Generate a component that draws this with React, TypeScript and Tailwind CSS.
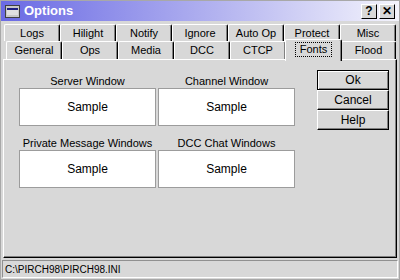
import React from "react";

const row1 = ["Logs", "Hilight", "Notify", "Ignore", "Auto Op", "Protect", "Misc"];
const row2 = ["General", "Ops", "Media", "DCC", "CTCP", "Fonts", "Flood"];

function Tab({ label, selected, w }: { label: string; selected?: boolean; w: number }) {
  if (selected) {
    return (
      <div
        className="relative z-10 -mt-[2px] -mb-[3px] -mx-[1px] flex h-[22px] items-start justify-center rounded-t-[2px] border-l border-t border-white border-r border-r-black bg-[#d8d8d8] pt-[2px] shadow-[inset_-1px_0_0_#808080]"
        style={{ width: w + 2 }}
      >
        <span className="border border-dotted border-black px-[4px] leading-[13px]">{label}</span>
      </div>
    );
  }
  return (
    <div
      className="flex h-full items-center justify-center rounded-t-[2px] border-l border-t border-white border-r border-r-black bg-[#d8d8d8] shadow-[inset_-1px_0_0_#808080]"
      style={{ width: w }}
    >
      {label}
    </div>
  );
}

function Box({ label }: { label: string }) {
  return (
    <div className="flex flex-col items-center">
      <div className="h-[13px] leading-[13px]">{label}</div>
      <div className="mt-[0px] flex h-[38px] w-[137px] items-center justify-center border border-[#9c9c9c] bg-white text-[12px]">
        Sample
      </div>
    </div>
  );
}

function Btn({ label, def }: { label: string; def?: boolean }) {
  return (
    <div
      className={
        "flex h-[20px] w-[72px] items-center justify-center bg-[#d8d8d8] text-[12px] " +
        (def
          ? "border border-black shadow-[inset_1px_1px_0_#fff,inset_-1px_-1px_0_#808080]"
          : "border-t border-l border-white border-r border-b border-r-black border-b-black shadow-[inset_-1px_-1px_0_#808080]")
      }
    >
      {label}
    </div>
  );
}

export default function App() {
  return (
    <div className="flex h-[280px] w-[400px] flex-col border border-[#a8a8a8] bg-[#d8d8d8] font-['Liberation_Sans',Arial,sans-serif] text-[11px] text-black">
      {/* title bar */}
      <div className="flex h-[20px] items-center bg-[linear-gradient(to_right,#6a6ae4,#b4b4f0_55%,#f4f4fc)] px-[4px]">
        <div className="mr-[4px] flex h-[13px] w-[15px] items-center justify-center border border-[#404040] bg-[#c8c8c8]">
          <div className="h-[7px] w-[11px] border-t-2 border-[#202080] bg-[#e0e0e0]" />
        </div>
        <span className="text-[13px] font-bold text-white">Options</span>
        <div className="ml-auto flex gap-[2px]">
          <div className="flex h-[15px] w-[16px] items-center justify-center border-l border-t border-white border-r border-b border-r-black border-b-black bg-[#d8d8d8] text-[12px] font-bold leading-none">
            ?
          </div>
          <div className="flex h-[15px] w-[16px] items-center justify-center border-l border-t border-white border-r border-b border-r-black border-b-black bg-[#d8d8d8] text-[12px] font-bold leading-none">
            ✕
          </div>
        </div>
      </div>

      {/* tabs */}
      <div className="mt-[3px] flex h-[17px] pl-[3px]">
        {row1.map((t) => (
          <Tab key={t} label={t} w={56} />
        ))}
      </div>
      <div className="flex h-[18px] pl-[5px]">
        {row2.map((t, i) => (
          <Tab key={t} label={t} w={i >= 5 ? 55 : 56} selected={t === "Fonts"} />
        ))}
      </div>

      {/* panel */}
      <div className="mx-[2px] flex h-[199px] border-l border-t border-white border-r border-b border-r-black border-b-black pl-[15px] pt-[15px] shadow-[inset_-1px_-1px_0_#808080]">
        <div className="grid grid-cols-[137px_137px] gap-x-[2px] gap-y-[11px] self-start">
          <Box label="Server Window" />
          <Box label="Channel Window" />
          <Box label="Private Message Windows" />
          <Box label="DCC Chat Windows" />
        </div>
        <div className="ml-[22px] mt-[-5px] flex flex-col gap-[0px]">
          <Btn label="Ok" def />
          <Btn label="Cancel" />
          <Btn label="Help" />
        </div>
      </div>

      {/* status bar */}
      <div className="mx-[1px] mt-[2px] flex h-[18px] items-center border-t border-l border-[#909090] border-r border-b border-r-white border-b-white pl-[2px] text-[10px]">
        C:\PIRCH98\PIRCH98.INI
      </div>
    </div>
  );
}
